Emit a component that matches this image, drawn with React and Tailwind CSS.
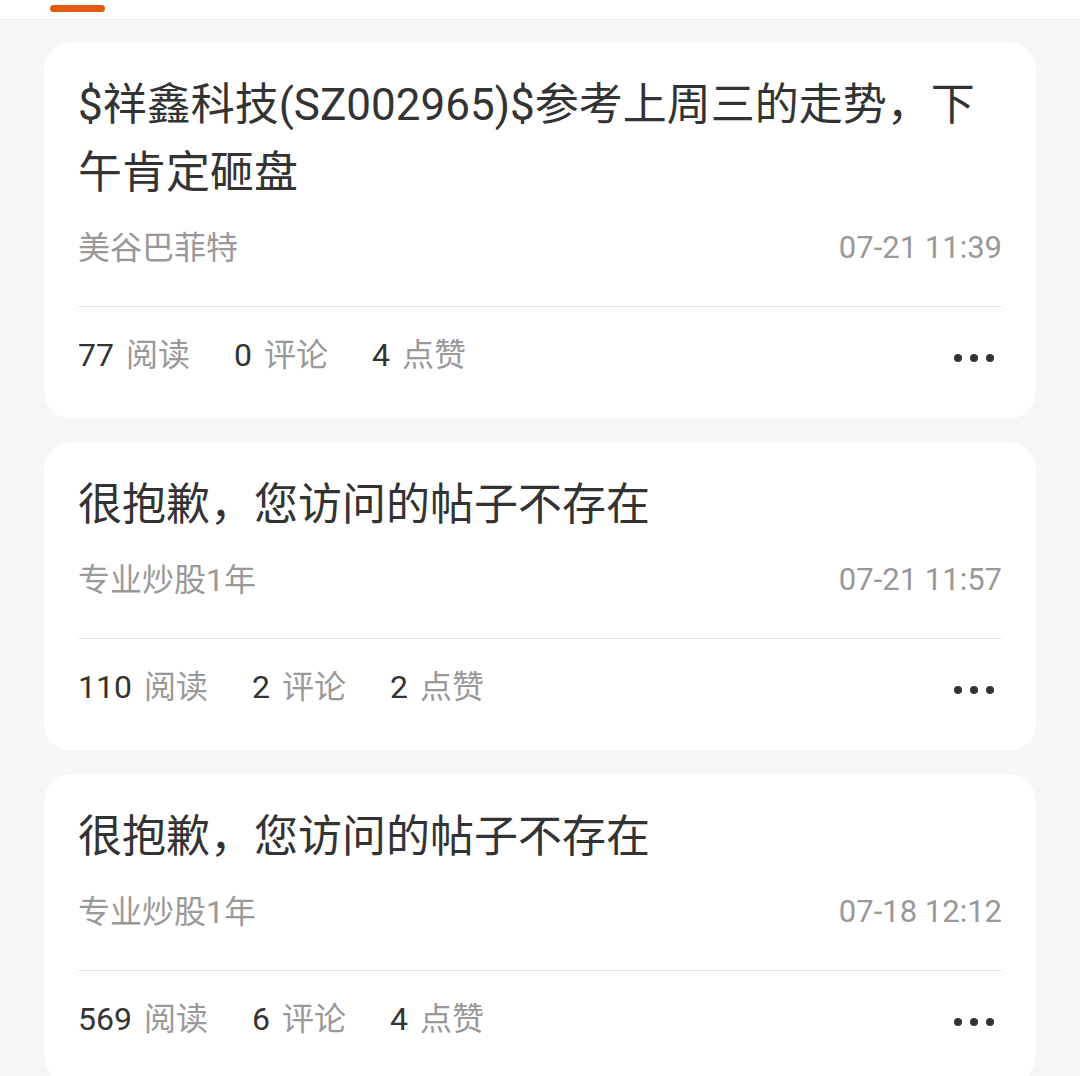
const posts = [
  {
    title: '$祥鑫科技(SZ002965)$参考上周三的走势，下午肯定砸盘',
    author: '美谷巴菲特',
    time: '07-21 11:39',
    reads: 77,
    comments: 0,
    likes: 4,
  },
  {
    title: '很抱歉，您访问的帖子不存在',
    author: '专业炒股1年',
    time: '07-21 11:57',
    reads: 110,
    comments: 2,
    likes: 2,
  },
  {
    title: '很抱歉，您访问的帖子不存在',
    author: '专业炒股1年',
    time: '07-18 12:12',
    reads: 569,
    comments: 6,
    likes: 4,
  },
];

function Stat({ value, label }) {
  return (
    <div className="flex items-center">
      <span className="text-[#333]">{value}</span>
      <span className="ml-3 text-[#999]">{label}</span>
    </div>
  );
}

function PostCard({ post }) {
  return (
    <div className="bg-white rounded-[28px] px-[34px] pt-[29px] pb-[40px]">
      <div className="text-[44px] leading-[68px] text-[#333]">{post.title}</div>
      <div className="mt-[17px] flex items-center justify-between text-[32px] leading-[48px] text-[#999]">
        <span>{post.author}</span>
        <span className="text-[31px]">{post.time}</span>
      </div>
      <div className="mt-[34px] h-px bg-[#e8e8e8]" />
      <div className="mt-[24px] flex items-center justify-between text-[32px] leading-[48px]">
        <div className="flex items-center gap-[44px]">
          <Stat value={post.reads} label="阅读" />
          <Stat value={post.comments} label="评论" />
          <Stat value={post.likes} label="点赞" />
        </div>
        <div className="flex items-center gap-[8px] pr-[8px] pt-[6px]">
          <span className="w-[8px] h-[8px] rounded-full bg-[#333]" />
          <span className="w-[8px] h-[8px] rounded-full bg-[#333]" />
          <span className="w-[8px] h-[8px] rounded-full bg-[#333]" />
        </div>
      </div>
    </div>
  );
}

export default function App() {
  return (
    <div
      className="min-h-screen bg-[#f5f6f8]"
      style={{ fontFamily: 'Roboto, "Noto Sans CJK SC", sans-serif' }}
    >
      {/* 顶部标签栏 */}
      <div className="h-[20px] bg-white border-b border-[#ececec] pl-[50px] pt-[5px]">
        <div className="w-[55px] h-[7px] rounded-full bg-[#e05a12]" />
      </div>
      <div className="px-[44px] pt-[22px] flex flex-col gap-[23px]">
        {posts.map((p, i) => (
          <PostCard key={i} post={p} />
        ))}
      </div>
    </div>
  );
}
